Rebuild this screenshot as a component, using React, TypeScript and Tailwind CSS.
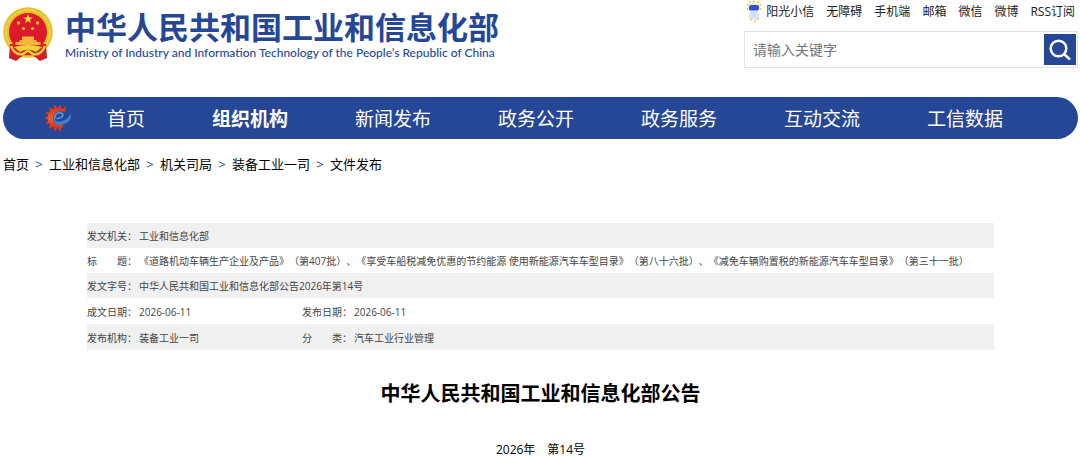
import React from 'react';

const quickLinks = ['阳光小信', '无障碍', '手机端', '邮箱', '微信', '微博', 'RSS订阅'];

const navItems = ['首页', '组织机构', '新闻发布', '政务公开', '政务服务', '互动交流', '工信数据'];

const crumbs = ['首页', '工业和信息化部', '机关司局', '装备工业一司', '文件发布'];

const GEAR_TEETH = [60, 85, 110, 135, 160, 185, 210, 235, 260];

const Emblem: React.FC = () => (
    <svg viewBox="0 0 52 56" className="h-[56px] w-[52px] shrink-0" aria-hidden="true">
        <circle cx="26" cy="25" r="24.8" fill="#e6c02c" />
        <circle cx="26" cy="25" r="22" fill="none" stroke="#efd548" strokeWidth="1.5" strokeDasharray="6 1" />
        <path d="M8 37 L44 37 L45 51 L38 54 L33 50 H19 L14 54 L7 51 Z" fill="#d41f28" />
        <circle cx="26" cy="25" r="19" fill="#dc1a2b" />
        <path d="M26 7 l1.2 3.5 h3.7 l-3 2.2 1.1 3.6 -3-2.2 -3 2.2 1.1-3.6 -3-2.2 h3.7z" fill="#f7d33c" />
        <g fill="#f2b63a">
            <circle cx="16.5" cy="16" r="1.7" />
            <circle cx="35.5" cy="16" r="1.7" />
            <circle cx="21.5" cy="21.5" r="1.6" />
            <circle cx="30.5" cy="21.5" r="1.6" />
            <path d="M20 29.5 h12 v3.5 h-12z M17.5 33 h17 v2 h4 v3 H13.5 v-3 h4z" />
        </g>
        <path d="M12 40 Q26 36 40 40 L34 45 Q26 40 18 45 Z" fill="#f0cf3c" />
        <path d="M9 39 Q13 49 21 47 L26 43.5 L31 47 Q39 49 43 39" fill="none" stroke="#eccb35" strokeWidth="2.5" />
        <path d="M20 49.5 H32" stroke="#eccb35" strokeWidth="2.5" />
    </svg>
);

const Mascot: React.FC = () => (
    <svg viewBox="0 0 16 24" className="h-6 w-4 shrink-0" aria-hidden="true">
        <rect x="2" y="3" width="12" height="9" rx="4" fill="#e6ecf8" />
        <path d="M4 11 H12 L13.5 17 L11.5 20 H9 L8 18 L7 20 H4.5 L2.5 17 Z" fill="#d9e3f6" />
        <path d="M8 12 V17" stroke="#b9caec" />
        <rect x="3" y="5" width="10" height="5.5" rx="2" fill="#3450c4" />
        <g fill="#f3c13f">
            <circle cx="1.5" cy="5" r="1" />
            <circle cx="4" cy="2" r="1" />
            <circle cx="8" cy="1.5" r="1" />
            <circle cx="12" cy="2" r="1" />
            <circle cx="14.5" cy="5" r="1" />
            <circle cx="1.5" cy="9" r="1" />
            <circle cx="14.5" cy="9" r="1" />
            <circle cx="5" cy="19.5" r="1" />
            <circle cx="9" cy="21.5" r="1" />
            <circle cx="12" cy="19" r="1" />
        </g>
    </svg>
);

const GearLogo: React.FC = () => (
    <svg viewBox="0 0 28 28" className="h-7 w-7 shrink-0" aria-hidden="true">
        <defs>
            <linearGradient id="gear" x1="0" y1="0" x2="0" y2="1">
                <stop offset="0" stopColor="#d9381f" />
                <stop offset="0.5" stopColor="#e8602c" />
                <stop offset="1" stopColor="#c93222" />
            </linearGradient>
        </defs>
        {GEAR_TEETH.map((deg) => (
            <rect key={deg} x="12.8" y="1" width="2.4" height="4" fill="#d5381f" transform={`rotate(${deg + 110} 14 14)`} />
        ))}
        <rect x="12.8" y="1" width="2.4" height="4" fill="#d5381f" transform="rotate(35 14 14)" />
        <path d="M22.5 7.5 A10.600 10.600 0 1 0 20.500 22.500 L17 20.5 A6.5 6.5 0 0 1 9.500 12 A7 7 0 0 1 18 7.5 Z" fill="url(#gear)" />
        <path d="M10.500 15.5 Q10.500 9.500 15 8.8 Q19.5 8.500 18.8 11.5 Q17.500 14.500 12.500 14.5" fill="none" stroke="#5e9ce0" strokeWidth="1.6" />
        <path d="M10 15 Q12 18.5 17 17.5 Q24 15.500 26.500 9.5 Q28 15 23 18.800 Q17 22.500 13 20.5 Q10 18.5 10 15 Z" fill="#3f7fd0" />
    </svg>
);

const Header: React.FC = () => (
    <header className="flex items-start justify-between px-[2px]">
        <a href="#" className="mt-[7px] flex items-start gap-[11px]">
            <Emblem />
            <div className="mt-[2px] whitespace-nowrap text-[#264796]">
                <h1 className="text-[31px] font-bold leading-[36px]">中华人民共和国工业和信息化部</h1>
                <p className="font-['Lato',sans-serif] text-[12px] font-medium leading-[16px]">
                    Ministry of Industry and Information Technology of the People’s Republic of China
                </p>
            </div>
        </a>
        <div className="w-[334px]">
            <ul className="flex h-6 items-center justify-end gap-3 whitespace-nowrap pr-[3px] text-[12px] leading-6 text-[#222]">
                {quickLinks.map((label, i) => (
                    <li key={label}>
                        <a href="#" className="flex items-center gap-1">
                            {i === 0 && <Mascot />}
                            {label}
                        </a>
                    </li>
                ))}
            </ul>
            <form className="mt-[7px] flex h-[37px] border border-[#e3e3e3] bg-white">
                <input
                    type="text"
                    aria-label="请输入关键字"
                    placeholder="请输入关键字"
                    className="min-w-0 flex-1 px-2 text-[14px] placeholder:text-[#757575] focus:outline-none"
                />
                <button type="button" aria-label="搜索" className="my-[2px] mr-px flex w-8 items-center justify-center bg-[#264796]">
                    <svg viewBox="0 0 22 22" className="h-[22px] w-[22px]" fill="none" stroke="#fff" strokeWidth="2.5">
                        <circle cx="9.5" cy="9.5" r="7.8" />
                        <path d="M15 15 L21 20.5" />
                    </svg>
                </button>
            </form>
        </div>
    </header>
);

const App: React.FC = () => {
    return (
        <div className="overflow-x-hidden bg-white font-['Open_Sans','Noto_Sans_CJK_SC',sans-serif] text-black [text-spacing-trim:space-all]">
            <Header />

            <nav className="ml-[3px] mr-[2px] mt-[29px] flex h-[42px] items-center rounded-full bg-[#264796] pl-[41px] text-white">
                <GearLogo />
                <ul className="ml-[35px] flex gap-[67px] whitespace-nowrap pt-[2px] text-[19px] leading-[42px]">
                    {navItems.map((label) => (
                        <li key={label} className={label === '组织机构' ? 'font-bold' : ''}>
                            <a href="#">{label}</a>
                        </li>
                    ))}
                </ul>
            </nav>

            <ol className="mt-[15px] flex pl-[3px] text-[13px] leading-5">
                {crumbs.map((label, i) => (
                    <li key={label} className="flex">
                        {i > 0 && <span className="w-5 text-center text-[#264796]">&gt;</span>}
                        <a href="#">{label}</a>
                    </li>
                ))}
            </ol>

            <main className="ml-[87px] mr-[86px] mt-[49px]">
                <table className="w-full table-fixed border-collapse text-left text-[10px] text-[#444]">
                    <colgroup>
                        <col className="w-[52px]" />
                        <col className="w-[163px]" />
                        <col className="w-[52px]" />
                        <col />
                    </colgroup>
                    <tbody className="whitespace-nowrap [&_td]:p-0 [&_td]:pt-[2px] [&_th]:p-0 [&_th]:pt-[2px] [&_th]:font-normal">
                        <tr className="h-[25px] bg-[#f0f0f0]">
                            <th scope="row">发文机关：</th>
                            <td colSpan={3}>工业和信息化部</td>
                        </tr>
                        <tr className="h-[25px]">
                            <th scope="row">标　　题：</th>
                            <td colSpan={3}>
                                《道路机动车辆生产企业及产品》（第407批）、《享受车船税减免优惠的节约能源 使用新能源汽车车型目录》（第八十六批）、《减免车辆购置税的新能源汽车车型目录》（第三十一批）
                            </td>
                        </tr>
                        <tr className="h-[25px] bg-[#f0f0f0]">
                            <th scope="row">发文字号：</th>
                            <td colSpan={3}>中华人民共和国工业和信息化部公告2026年第14号</td>
                        </tr>
                        <tr className="h-[26px]">
                            <th scope="row">成文日期：</th>
                            <td>2026-06-11</td>
                            <th scope="row">发布日期：</th>
                            <td>2026-06-11</td>
                        </tr>
                        <tr className="h-[26px] bg-[#f0f0f0]">
                            <th scope="row">发布机构：</th>
                            <td>装备工业一司</td>
                            <th scope="row">分　　类：</th>
                            <td>汽车工业行业管理</td>
                        </tr>
                    </tbody>
                </table>

                <h2 className="mt-[29px] text-center text-[20px] font-bold leading-[30px]">中华人民共和国工业和信息化部公告</h2>
                <p className="mt-[31px] text-center text-[12px] leading-5">2026年　第14号</p>
            </main>
        </div>
    );
};

export default App;
